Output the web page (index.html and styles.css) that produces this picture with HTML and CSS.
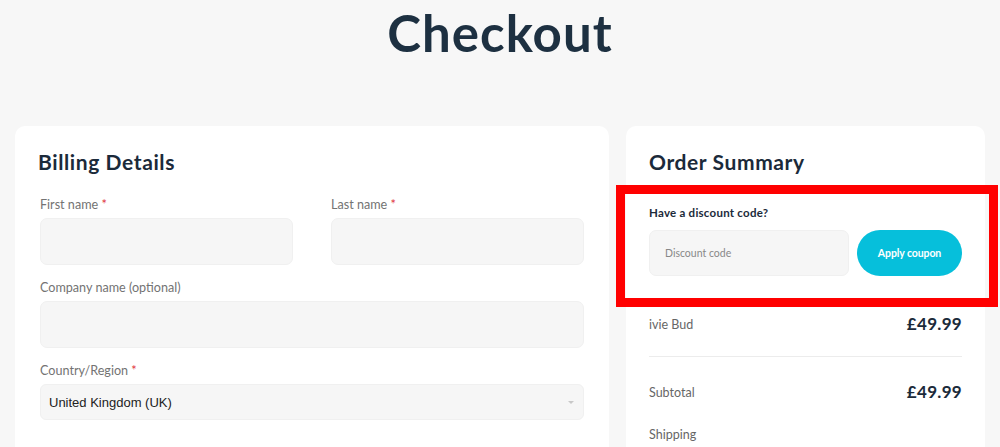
FILE: index.html
```html
<!DOCTYPE html>
<html lang="en">
<head>
<meta charset="utf-8">
<title>Checkout</title>
<link rel="stylesheet" href="styles.css">
</head>
<body>
<h1 class="page-title">Checkout</h1>
<main class="layout">
  <section class="card billing">
    <h2 class="card-title">Billing Details</h2>
    <div class="fields">
      <div class="row two">
        <div class="field">
          <label class="label">First name <span class="req">*</span></label>
          <div class="input"></div>
        </div>
        <div class="field">
          <label class="label">Last name <span class="req">*</span></label>
          <div class="input"></div>
        </div>
      </div>
      <div class="field">
        <label class="label">Company name (optional)</label>
        <div class="input"></div>
      </div>
      <div class="field">
        <label class="label">Country/Region <span class="req">*</span></label>
        <div class="select">
          <span class="select-value">United Kingdom (UK)</span>
          <span class="caret"></span>
        </div>
      </div>
    </div>
  </section>
  <aside class="card summary">
    <h2 class="card-title">Order Summary</h2>
    <div class="coupon">
      <span class="highlight"></span>
      <div class="coupon-label">Have a discount code?</div>
      <div class="coupon-row">
        <div class="coupon-input">Discount code</div>
        <button class="coupon-btn">Apply coupon</button>
      </div>
    </div>
    <div class="line item">
      <span class="line-name">ivie Bud</span>
      <span class="line-price">£49.99</span>
    </div>
    <div class="line subtotal">
      <span class="line-name">Subtotal</span>
      <span class="line-price">£49.99</span>
    </div>
    <div class="line shipping">
      <span class="line-name">Shipping</span>
    </div>
  </aside>
</main>
</body>
</html>
```
FILE: styles.css
```css
* { box-sizing: border-box; }
html, body { margin: 0; padding: 0; }
body {
  background: #f7f7f7;
  font-family: Lato, "Open Sans", Arial, sans-serif;
  color: #1b2a3a;
  height: 447px;
  overflow: hidden;
}
.page-title {
  margin: 0;
  padding-top: 5px;
  height: 126px;
  text-align: center;
  font-size: 51px;
  line-height: 56px;
  font-weight: 700;
  letter-spacing: 1px;
  color: #1d3041;
}
.layout {
  display: grid;
  grid-template-columns: 594px 359px;
  gap: 17px;
  padding: 0 15px;
}
.card {
  background: #fff;
  border-radius: 10px;
  padding: 23px 23px 0;
  min-height: 340px;
}
.card-title {
  margin: 0;
  font-size: 21px;
  line-height: 26px;
  font-weight: 700;
  letter-spacing: 0.6px;
  color: #1b2a3a;
}
.fields {
  padding: 0 2px;
  margin-top: 22px;
  display: flex;
  flex-direction: column;
  gap: 15px;
}
.row.two {
  display: grid;
  grid-template-columns: 1fr 1fr;
  gap: 38px;
}
.label {
  display: block;
  font-size: 12.6px;
  line-height: 16px;
  color: #737373;
  margin-bottom: 5px;
}
.req { color: #e0313b; }
.input {
  height: 47px;
  background: #f6f6f6;
  border: 1px solid #f0f0f0;
  border-radius: 7px;
}
.select {
  height: 36px;
  background: #f6f6f6;
  border: 1px solid #f0f0f0;
  border-radius: 6px;
  display: flex;
  align-items: center;
  justify-content: space-between;
  padding: 0 9px 0 8px;
}
.select-value {
  font-family: "Liberation Sans", Arial, sans-serif;
  font-size: 13px;
  color: #222;
}
.caret {
  width: 0;
  height: 0;
  border-left: 3px solid transparent;
  border-right: 3px solid transparent;
  border-top: 3px solid #c8c8c8;
}
.coupon {
  position: relative;
  margin-top: 19px;
  padding: 12px 0 22px;
}
.highlight {
  position: absolute;
  top: -9px;
  bottom: -9px;
  left: -33px;
  right: -36px;
  border: 9px solid #ff0000;
  pointer-events: none;
}
.coupon-label {
  font-size: 11.5px;
  line-height: 14px;
  font-weight: 700;
  letter-spacing: 0.25px;
  color: #1b2a3a;
  margin-bottom: 10px;
}
.coupon-row {
  display: flex;
  gap: 8px;
}
.coupon-input {
  flex: 1;
  height: 46px;
  background: #f6f6f6;
  border: 1px solid #f0f0f0;
  border-radius: 7px;
  display: flex;
  align-items: center;
  padding-left: 15px;
  font-size: 10.5px;
  color: #888;
}
.coupon-btn {
  width: 105px;
  height: 46px;
  border: none;
  border-radius: 23px;
  background: #06bfdb;
  color: #fff;
  font-family: Lato, Arial, sans-serif;
  font-size: 10.5px;
  font-weight: 700;
  letter-spacing: -0.1px;
}
.line {
  display: flex;
  justify-content: space-between;
  align-items: center;
  height: 22px;
}
.line-name {
  font-size: 12.5px;
  color: #666;
  line-height: 16px;
  padding-top: 4px;
}
.line-price {
  font-size: 17px;
  font-weight: 700;
  letter-spacing: 0.3px;
  color: #1b2a3a;
}
.line.item {
  margin-top: 14px;
  box-sizing: content-box;
  padding-bottom: 22px;
  border-bottom: 1px solid #ececec;
}
.line.subtotal { margin-top: 23px; }
.line.shipping { margin-top: 20px; }
```
